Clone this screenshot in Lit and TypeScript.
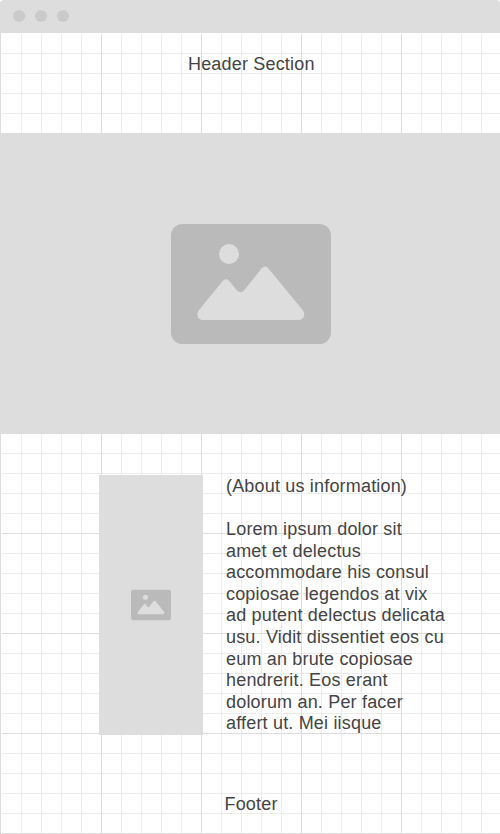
import { LitElement, html, css } from "lit";
import { customElement } from "lit/decorators.js";

@customElement("picture-icon")
class PictureIcon extends LitElement {
  static styles = css`
    :host { display: block; }
    svg { display: block; width: 100%; height: 100%; }
  `;
  render() {
    return html`<svg viewBox="0 0 160 120" preserveAspectRatio="none">
      <rect width="160" height="120" rx="11.5" fill="#bababa" />
      <circle cx="58" cy="30" r="10" fill="#dddddd" />
      <path fill="#dddddd" d="M28 86 L51.5 57.3 Q55 53.3 58.5 57.3 L66 66.5 Q69.5 70 73 66.5 L90.5 44.5 Q94 40.3 97.5 44.5 L132 86.5 C135 91 132.5 96 127.5 96 L32 96 C27 96 24.5 90.5 28 86 Z" />
    </svg>`;
  }
}

@customElement("app-root")
class AppRoot extends LitElement {
  static styles = css`
    :host {
      display: flex;
      flex-direction: column;
      height: 834px;
      box-sizing: border-box;
      overflow: hidden;
      background: #fff;
      color: #444;
      font: 18px/21.6px "Liberation Sans", Arial, sans-serif;
      letter-spacing: 0.18px;
    }
    .bar {
      flex: none;
      display: flex;
      align-items: center;
      gap: 10px;
      height: 33px;
      box-sizing: border-box;
      padding: 0 13px 1px;
      background: #ddd;
      border-radius: 4px 4px 0 0;
    }
    .dot { width: 12px; height: 12px; border-radius: 50%; background: #cacaca; }
    .page {
      flex: 1;
      display: flex;
      flex-direction: column;
      background:
        linear-gradient(#ddd, #ddd) 0 0 / 1px 100% no-repeat,
        linear-gradient(#fff, #fff) 1px 0 / 1px 100% no-repeat,
        linear-gradient(#fff, #fff) 0 0 / 100% 1px no-repeat,
        linear-gradient(90deg, #ddd 1px, transparent 1px) 1px 0 / 100px 100px,
        linear-gradient(#ddd 1px, transparent 1px) 1px 0 / 100px 100px,
        linear-gradient(90deg, #ececec 1px, transparent 1px) 1px 0 / 20px 20px,
        linear-gradient(#ececec 1px, transparent 1px) 1px 0 / 20px 20px;
    }
    header { height: 100px; box-sizing: border-box; padding: 21px 0 0 188px; }
    .hero {
      height: 301px;
      box-sizing: border-box;
      padding: 91px 0 0 171px;
      background: #ddd;
    }
    .hero picture-icon { width: 160px; height: 120px; }
    .about { display: flex; gap: 23px; padding: 41px 0 0 99px; height: 260px; }
    .thumb {
      display: flex;
      align-items: center;
      justify-content: center;
      width: 104px;
      height: 260px;
      background: #ddd;
    }
    .thumb picture-icon { width: 40px; height: 31px; margin-top: 1px; transform: translateY(-0.5px); }
    .copy { width: 224px; padding-top: 0.85px; }
    p { margin: 0 0 21.6px; }
    footer { padding: 59px 0 0 224.5px; }
  `;
  render() {
    return html`
      <div class="bar"><i class="dot"></i><i class="dot"></i><i class="dot"></i></div>
      <main class="page">
        <header>Header Section</header>
        <div class="hero"><picture-icon></picture-icon></div>
        <section class="about">
          <div class="thumb"><picture-icon></picture-icon></div>
          <div class="copy">
            <p>(About us information)</p>
            <p>Lorem ipsum dolor sit<br />amet et delectus<br />accommodare his consul<br />copiosae legendos at vix<br />ad putent delectus delicata<br />usu. Vidit dissentiet eos cu<br />eum an brute copiosae<br />hendrerit. Eos erant<br />dolorum an. Per facer<br />affert ut. Mei iisque</p>
          </div>
        </section>
        <footer>Footer</footer>
      </main>
    `;
  }
}
